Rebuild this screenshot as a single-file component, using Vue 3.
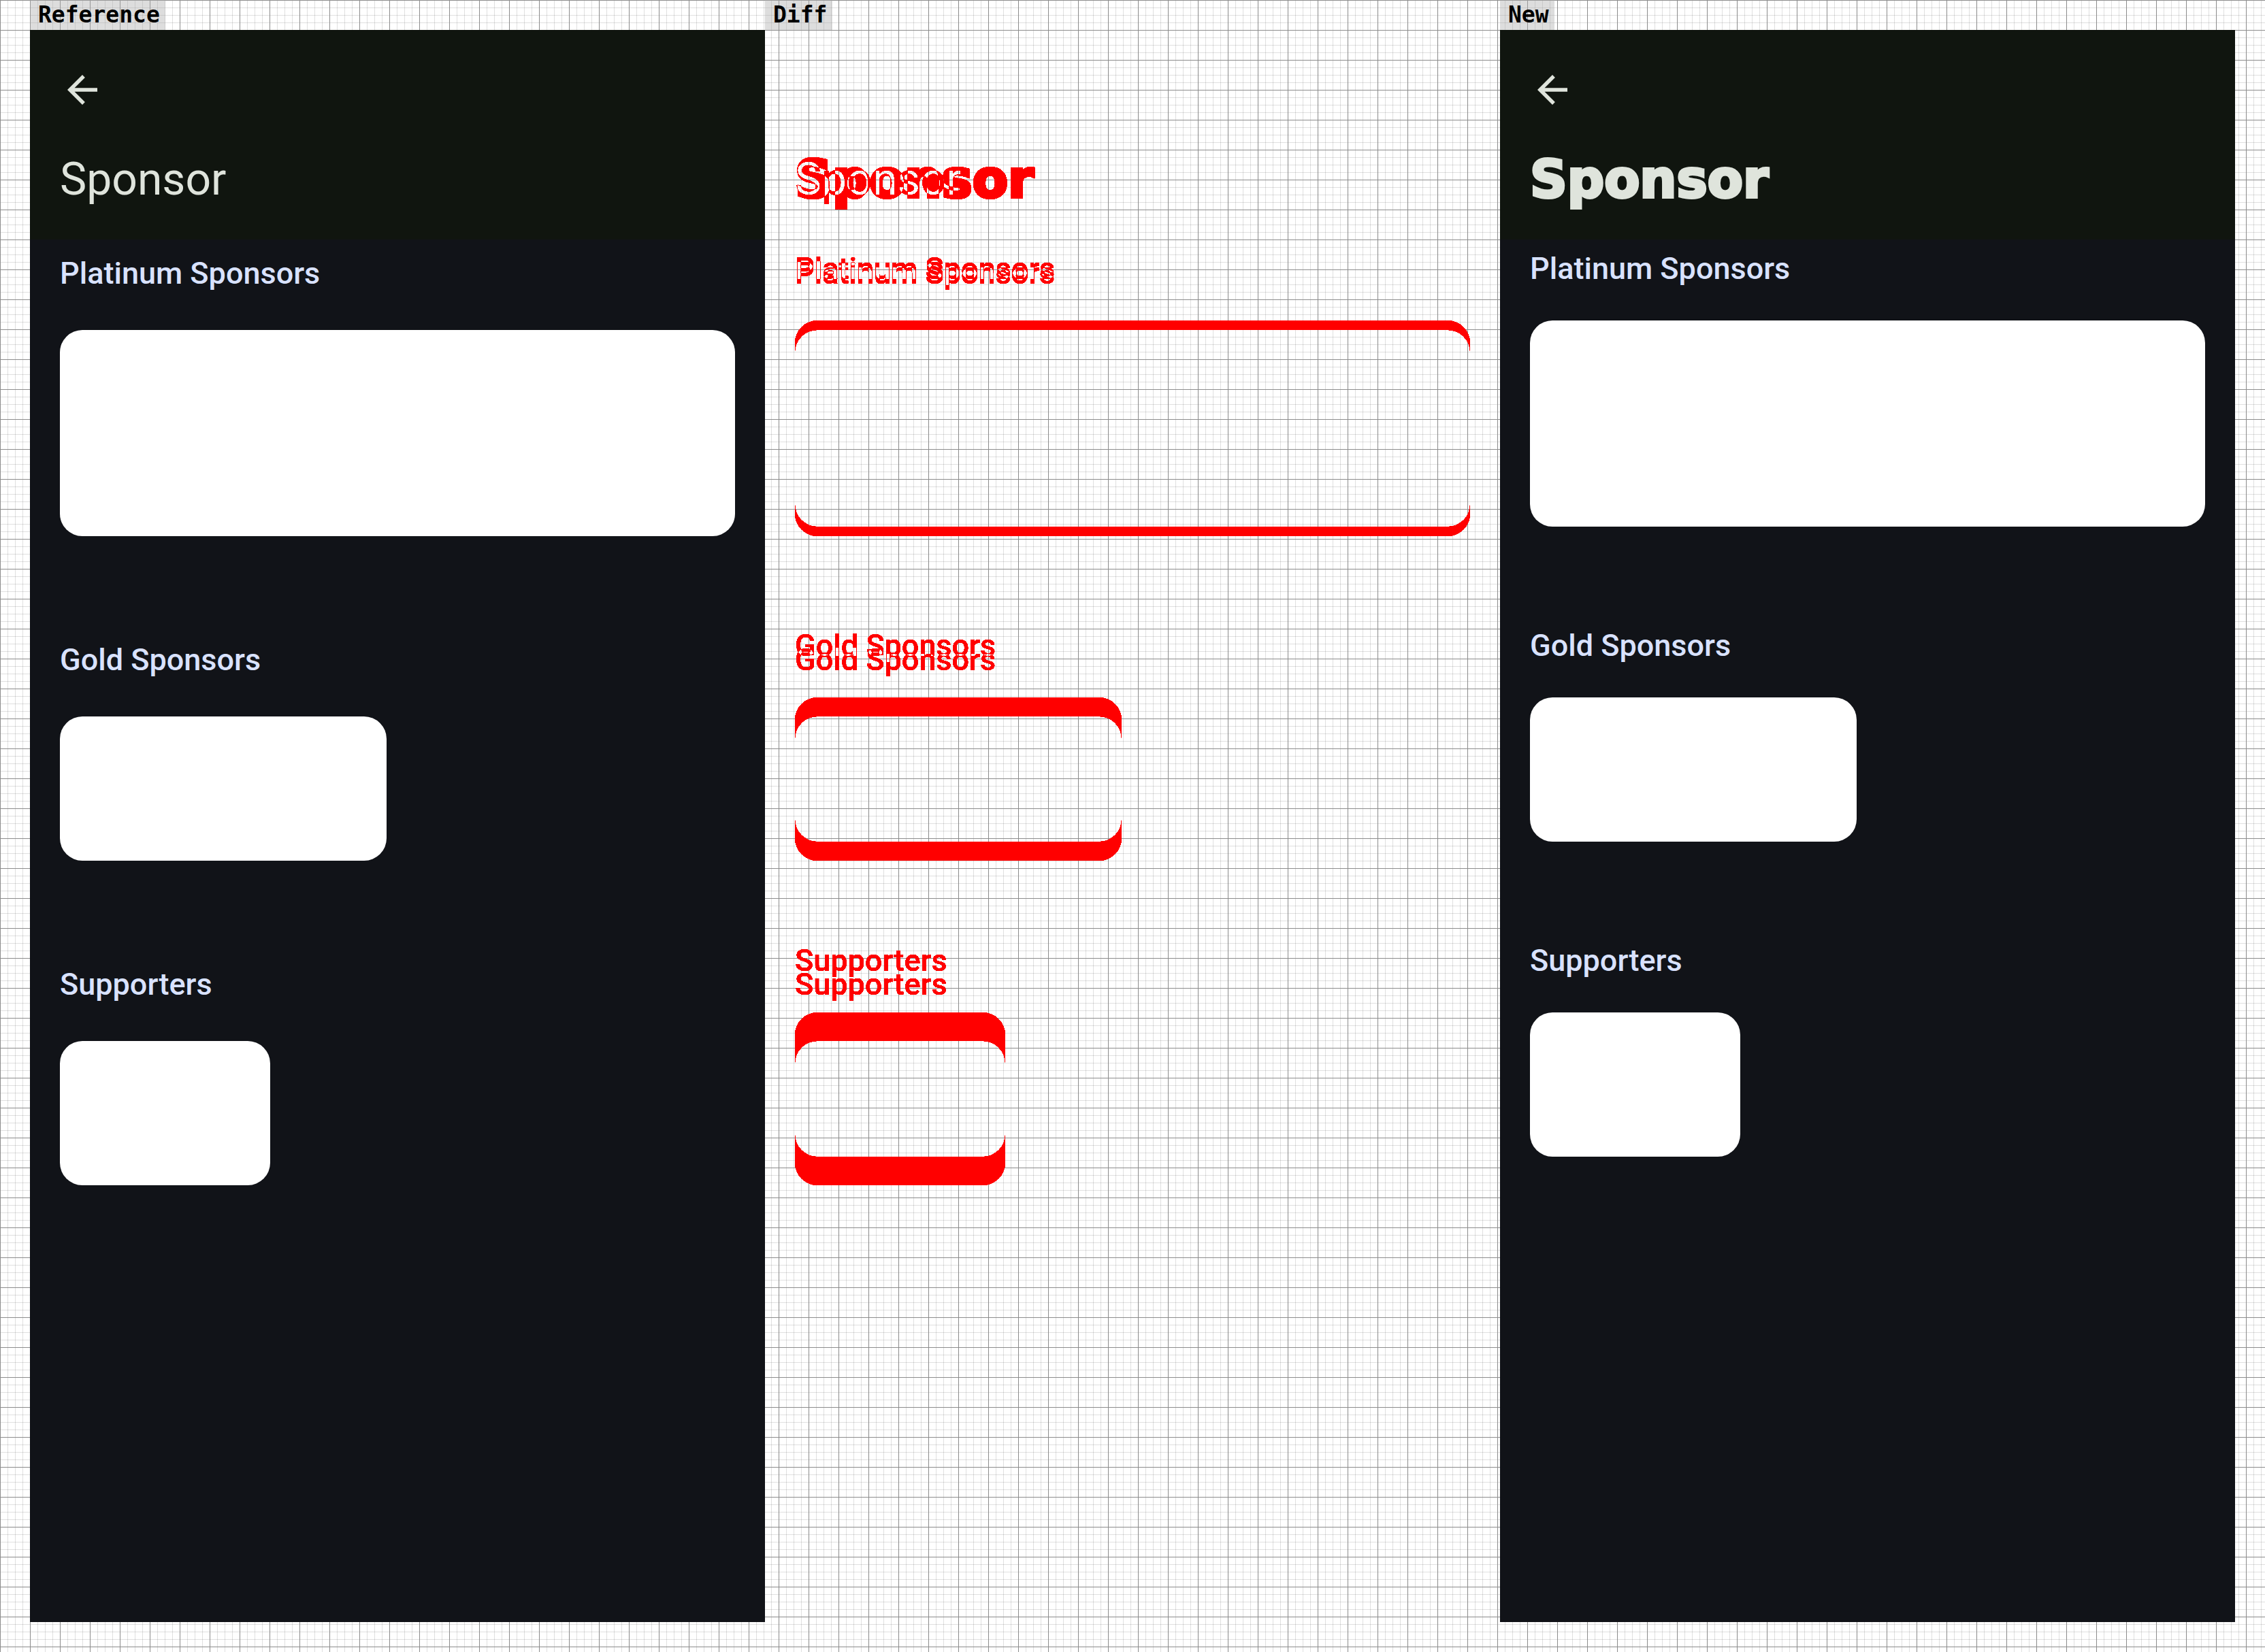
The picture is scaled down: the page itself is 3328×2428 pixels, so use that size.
<script setup>
const panels = [
  { id: 'reference', label: 'Reference', layers: ['base'] },
  { id: 'diff', label: 'Diff', layers: ['base', 'changed'] },
  { id: 'new', label: 'New', layers: ['changed'] }
]

const tiers = [
  { id: 'platinum', title: 'Platinum Sponsors' },
  { id: 'gold', title: 'Gold Sponsors' },
  { id: 'supporters', title: 'Supporters' }
]
</script>

<template>
  <main class="comparison">
    <!-- Turns every pixel that is not white into opaque red -->
    <svg class="defs" aria-hidden="true">
      <filter id="changed-pixels" x="0" y="0" width="1" height="1" color-interpolation-filters="sRGB">
        <feColorMatrix values="0 0 0 0 1  0 0 0 0 0  0 0 0 0 0  0 -8 0 0 7" />
      </filter>
    </svg>

    <section v-for="panel in panels" :key="panel.id" class="panel" :class="panel.id">
      <h2 class="label">{{ panel.label }}</h2>
      <div class="stage">
        <article v-for="layer in panel.layers" :key="layer" class="screen" :class="layer">
          <header class="top-bar">
            <button class="back" type="button" aria-label="Back">
              <svg viewBox="0 0 24 24" aria-hidden="true">
                <path d="M20 11H7.83l5.59-5.59L12 4l-8 8 8 8 1.41-1.41L7.83 13H20v-2z" />
              </svg>
            </button>
            <h1 class="title">Sponsor</h1>
          </header>
          <div class="tiers">
            <section v-for="tier in tiers" :key="tier.id" class="tier" :class="tier.id">
              <h3 class="tier-title">{{ tier.title }}</h3>
              <div class="cards">
                <div class="card"></div>
              </div>
            </section>
          </div>
        </article>
      </div>
    </section>
  </main>
</template>

<style>
body {
  margin: 0;
  background: #ffffff;
}
</style>

<style scoped>
.comparison {
  display: grid;
  grid-template-columns: repeat(3, minmax(0, 1fr));
  padding: 0 44px 44px;
  background-color: #ffffff;
  background-image:
    linear-gradient(to right, #8c8c8c 1px, transparent 1px),
    linear-gradient(to bottom, #8c8c8c 1px, transparent 1px),
    linear-gradient(to right, rgba(0, 0, 0, 0.12) 1px, transparent 1px),
    linear-gradient(to bottom, rgba(0, 0, 0, 0.12) 1px, transparent 1px);
  background-size: 44px 44px, 44px 44px, 11px 11px, 11px 11px;
  font-family: Roboto, sans-serif;
}

.defs {
  position: absolute;
  width: 0;
  height: 0;
}

.panel {
  display: flex;
  flex-direction: column;
  align-items: stretch;
}

.label {
  align-self: flex-start;
  margin: 0;
  padding: 0 8px 0 12px;
  background: rgba(170, 170, 170, 0.4);
  color: #000000;
  font: bold 33px/44px "DejaVu Sans Mono", monospace;
}

.stage {
  display: grid;
  aspect-ratio: 6 / 13;
}

.screen {
  grid-area: 1 / 1;
  background: #111318;
}

.top-bar {
  display: flex;
  flex-direction: column;
  align-items: flex-start;
  gap: 55px;
  padding: 55px 44px 44px;
  background: #10150f;
  color: #dfe4dc;
}

.back {
  display: block;
  width: 66px;
  height: 66px;
  padding: 0;
  border: 0;
  background: none;
  color: inherit;
}

.back svg {
  display: block;
  width: 100%;
  height: 100%;
  fill: currentColor;
}

.title {
  margin: 0;
  font-size: 66px;
  font-weight: 400;
  line-height: 88px;
}

.tiers {
  display: flex;
  flex-direction: column;
  gap: 149px;
  padding: 17px 44px 44px;
}

.tier {
  display: flex;
  flex-direction: column;
  gap: 50px;
}

.tier-title {
  margin: 0;
  color: #d9e2ff;
  font-size: 45px;
  font-weight: 500;
  line-height: 66px;
}

.cards {
  display: grid;
  gap: 32px;
}

.gold .cards {
  grid-template-columns: repeat(2, 1fr);
}

.supporters .cards {
  grid-template-columns: repeat(3, 1fr);
}

.card {
  height: 212px;
  border-radius: 33px;
  background: #ffffff;
}

.platinum .card {
  height: 303px;
}

.changed .title {
  font-family: "DejaVu Sans", sans-serif;
  font-size: 76px;
  font-weight: 700;
  -webkit-text-stroke: 4px currentColor;
}

.changed .tier-title {
  line-height: 52px;
}

/* Two cyan layers differenced over white leave red only where they disagree */
.diff .stage {
  isolation: isolate;
  background: #ffffff;
  filter: url(#changed-pixels);
}

.diff .screen {
  background: none;
  mix-blend-mode: difference;
}

.diff .top-bar {
  background: none;
  color: #00ffff;
}

.diff .back {
  visibility: hidden;
}

.diff .tier-title {
  color: #00ffff;
}

.diff .card {
  background: #00ffff;
}
</style>
